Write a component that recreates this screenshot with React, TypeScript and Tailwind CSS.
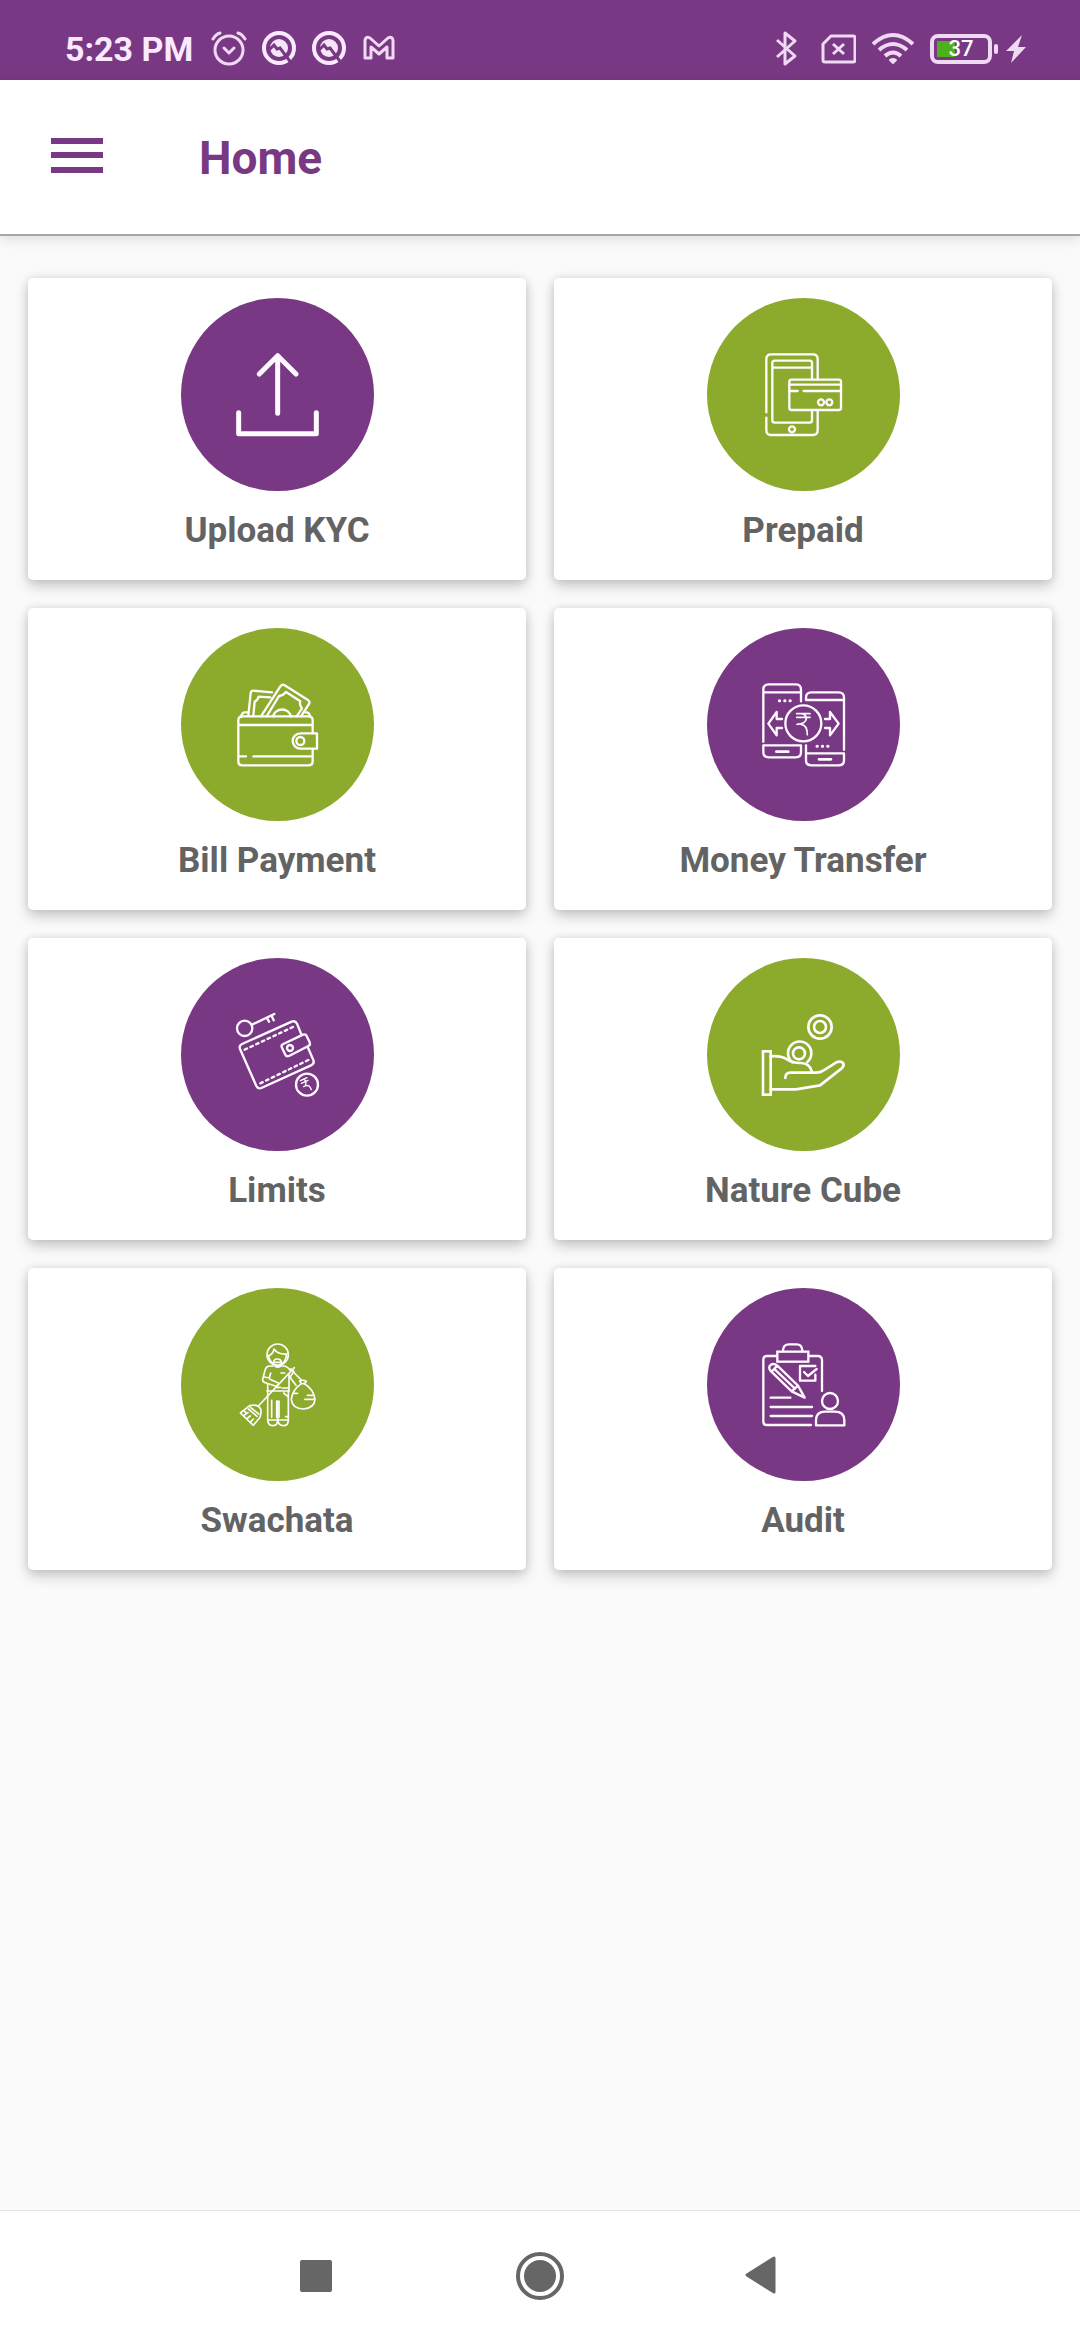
import React from 'react';

interface Tile {
  label: string;
  tone: 'purple' | 'green';
  viewBox: string;
  strokeWidth: number;
  art: React.ReactNode;
}

const LEFT_BOX = '30 23 579 579';
const RIGHT_BOX = '18 23 579 579';

const tiles: Tile[] = [
  {
    label: 'Upload KYC',
    tone: 'purple',
    viewBox: LEFT_BOX,
    strokeWidth: 15,
    art: <path d="M203 367V430H436V367M320 198V369M265 251L320 196L375 251" />,
  },
  {
    label: 'Prepaid',
    tone: 'green',
    viewBox: RIGHT_BOX,
    strokeWidth: 7,
    art: (
      <>
        <path d="M196 366V206Q196 192 210 192H336Q350 192 350 206V266M350 360V420Q350 434 336 434H210Q196 434 196 420V382" />
        <path d="M333 266V218Q333 211 326 211H221Q214 211 214 218V390Q214 397 221 397H326Q333 397 333 390V360M214 232H333" />
        <rect x="265" y="268" width="155" height="91" rx="6" />
        <path d="M265 283H420M265 302H290M308 302H420" />
        <circle cx="360" cy="336" r="9" />
        <circle cx="385" cy="336" r="9" />
        <circle cx="273" cy="417" r="9" />
      </>
    ),
  },
  {
    label: 'Bill Payment',
    tone: 'green',
    viewBox: LEFT_BOX,
    strokeWidth: 7,
    art: (
      <>
        <path d="M425 335V300Q425 288 413 288H213Q202 288 202 300V423Q202 435 213 435H413Q425 435 425 423V388M202 314H425" />
        <path d="M210 290Q212 276 222 276H232M403 276H408Q416 278 417 289" />
        <path d="M438 339H388A23 23 0 0 0 388 385H438Z" />
        <circle cx="388" cy="362" r="12" />
        <path d="M205 408H225M247 408H422" />
        <path d="M232 286L239 218Q240 211 247 211L303 216M247 286L251 244Q259 241 263 229L298 231" />
        <path d="M270 288L328 198Q334 190 341 195L412 240Q418 245 414 251L390 288" />
        <path d="M287 288L324 227Q336 226 345 215L388 243Q384 252 393 264L377 288" />
        <path d="M306 288A28 28 0 0 1 360 288" />
      </>
    ),
  },
  {
    label: 'Money Transfer',
    tone: 'purple',
    viewBox: RIGHT_BOX,
    strokeWidth: 7,
    art: (
      <>
        <path d="M187 364V208Q187 192 203 192H285Q300 192 300 208V243M187 216H300" />
        <path d="M187 375H300V396Q300 411 285 411H203Q187 411 187 396Z" />
        <path d="M315 238V232Q315 216 331 216H413Q429 216 429 232V388M315 239H429" />
        <path d="M315 375V420Q315 435 331 435H413Q429 435 429 420V399H315" />
        <path d="M226 394H262M354 417H390" strokeWidth="8" />
        <path d="M235 241h1M251 241h1M267 241h1M348 378h1M364 378h1M380 378h1" strokeWidth="9" />
        <circle cx="307" cy="309" r="54" />
        <path d="M287 280H327M287 291H327M302 280Q316 283 316 295Q314 311 288 312M300 312Q319 314 319 343" strokeWidth="5" />
        <path d="M243 296H227V275L202 310L227 345V323H243M372 296H387V275L413 310L387 345V323H372" />
      </>
    ),
  },
  {
    label: 'Limits',
    tone: 'purple',
    viewBox: LEFT_BOX,
    strokeWidth: 7,
    art: (
      <>
        <circle cx="221" cy="234" r="23" />
        <path d="M243 223L310 191M288 203L294 214M302 197L308 210" />
        <path d="M390 250L378 220Q373 210 362 214L213 281Q203 286 207 296L256 407Q261 417 271 413L420 345Q431 340 427 329L411 292" />
        <path d="M221 298L368 229M268 399L414 328" strokeDasharray="8 11" />
        <path d="M337 281L396 253Q404 250 407 257L416 276Q419 284 412 287L354 317Q346 320 343 313L332 290Q330 284 337 281Z" />
        <circle cx="357" cy="293" r="9" />
        <circle cx="408" cy="403" r="33" />
        <path d="M388 391L408 382M391 399L411 390M399 387Q409 395 402 407L398 409M402 407Q415 401 421 418" strokeWidth="4" />
      </>
    ),
  },
  {
    label: 'Nature Cube',
    tone: 'green',
    viewBox: RIGHT_BOX,
    strokeWidth: 8,
    art: (
      <>
        <circle cx="357" cy="230" r="35" />
        <circle cx="357" cy="230" r="18" />
        <path d="M273 335A35 35 0 1 1 319 335" />
        <circle cx="294" cy="309" r="18" />
        <rect x="186" y="303" width="23" height="130" strokeLinejoin="miter" />
        <path d="M209 318Q240 315 259 328Q276 339 300 338Q326 339 332 362" />
        <path d="M253 383Q253 367 268 367H346Q358 367 368 360L406 336Q420 330 427 339Q430 347 422 354L357 405L285 417H209" />
      </>
    ),
  },
  {
    label: 'Swachata',
    tone: 'green',
    viewBox: LEFT_BOX,
    strokeWidth: 5,
    art: (
      <>
        <circle cx="320" cy="223" r="32" />
        <path d="M293 226Q306 222 309 206Q320 223 348 221M293 226Q294 240 306 250M346 222Q346 240 334 250" />
        <path d="M308 250Q306 236 319 236Q332 236 331 250Q320 262 308 250M313 246H326" />
        <path d="M307 257H296Q286 257 283 267L275 297Q274 305 283 307L313 317Q323 316 322 308L297 297M299 278L295 293L280 290" />
        <path d="M332 257H341Q350 259 357 269M312 257Q320 264 329 257M330 278H341M354 283V332M290 311V332" />
        <path d="M288 332H354M316 321H328M333 323H352M338 338L350 348" />
        <path d="M290 332V418Q291 436 305 436Q320 436 320 418V362M320 418Q322 436 337 436Q352 436 352 418V332M291 419H351" />
        <path d="M302 360V411M317 362V411M324 362V411M344 409H350" />
        <path d="M370 262L262 377M359 266L369 274" />
        <path d="M208 398L236 376Q260 370 269 386Q272 400 266 412L247 435Z" />
        <path d="M238 381L263 401M232 386L258 408M220 404L231 397M230 413L238 407M240 424L247 416M224 396L219 391" />
        <path d="M367 275L391 299M357 291L375 315M367 275L357 291" />
        <path d="M386 302Q398 297 406 303L400 310H391ZM391 310Q363 330 361 358Q364 385 397 386Q430 383 432 357Q428 326 400 310" />
        <path d="M367 339H380M409 345H425M401 357H428" />
      </>
    ),
  },
  {
    label: 'Audit',
    tone: 'purple',
    viewBox: RIGHT_BOX,
    strokeWidth: 7,
    art: (
      <>
        <path d="M227 227H198Q187 227 187 238V424Q187 434 198 434H330M325 227H350Q363 227 363 240V332" />
        <rect x="229" y="214" width="93" height="30" strokeLinejoin="miter" />
        <path d="M246 211Q246 192 264 192H287Q303 192 304 211" />
        <path d="M229 256L291 316L311 352L272 333L208 271Q201 261 209 254Q218 247 229 256ZM229 256L212 274M222 268L282 325M291 316L272 333" />
        <path d="M343 257H297V301H343V283M309 275L321 287L347 266" />
        <path d="M209 352H268M209 380H333M209 407H333" />
        <circle cx="387" cy="362" r="24" />
        <path d="M345 435V420Q345 394 372 394H402Q430 394 430 420V435Z" />
      </>
    ),
  },
];

function AlarmIcon() {
  return (
    <svg viewBox="0 0 36 36" className="size-9" fill="none" stroke="#efd9f3" strokeWidth="3" strokeLinecap="round" strokeLinejoin="round">
      <circle cx="18" cy="19" r="14" />
      <path d="M13 17L18 22L23 17" />
      <path d="M2 8Q5 3 9 2M34 8Q31 3 27 2" />
    </svg>
  );
}

function QuickIcon() {
  return (
    <svg viewBox="0 0 36 36" className="size-9" fill="none">
      <circle cx="18" cy="17" r="15" stroke="#fbeaff" strokeWidth="4" />
      <circle cx="18" cy="17" r="9" fill="#f4e6f6" />
      <path d="M7 20L13 14L16 18L19 17L31 33" stroke="#793883" strokeWidth="3" />
    </svg>
  );
}

function MailIcon() {
  return (
    <svg viewBox="0 0 36 36" className="size-9" fill="none" stroke="#efd9f3" strokeWidth="3" strokeLinejoin="round">
      <path d="M4 27V9Q5 5 9 7L18 15L27 7Q31 5 32 9V27H26V16L18 23L10 16V27Z" />
    </svg>
  );
}

function StatusBar() {
  return (
    <div className="flex h-20 items-center justify-between bg-[#793883] pt-[18px] pr-[54px] pl-[65px]">
      <div className="flex items-center gap-[14px]">
        <span className="mr-1 text-[34px] leading-10 font-bold text-[#fbeaff]">5:23 PM</span>
        <AlarmIcon />
        <QuickIcon />
        <QuickIcon />
        <MailIcon />
      </div>
      <div className="flex items-center gap-4">
        <svg viewBox="0 0 36 36" className="size-9" fill="none" stroke="#efd9f3" strokeWidth="3" strokeLinejoin="round">
          <path d="M9 9L27 25L17 33V2L27 10L9 26" />
        </svg>
        <svg viewBox="0 0 36 36" className="size-9" fill="none" stroke="#efd9f3" strokeWidth="3" strokeLinejoin="round">
          <path d="M11 5H33Q35 5 35 7V29Q35 31 33 31H5Q3 31 3 29V13Z" />
          <path d="M13 13L24 23M24 13L13 23" />
        </svg>
        <svg viewBox="0 0 42 36" className="h-9 w-[42px]" fill="none" stroke="#efd9f3" strokeWidth="4">
          <path d="M1 13Q21 -5 41 13M7 19Q21 7 35 19M13 25Q21 18 29 25" />
          <path d="M18 29Q21 27 24 29L21 32Z" fill="#efd9f3" stroke="#efd9f3" strokeWidth="2" strokeLinejoin="round" />
        </svg>
        <div className="flex items-center gap-2">
          <div className="flex items-center gap-[2px]">
            <div className="relative flex h-[30px] w-[62px] items-center justify-center rounded-lg border-4 border-[#efd9f3]">
              <span className="absolute top-[3px] left-[3px] h-4 w-[18px] bg-[#4caf1c]" />
              <span className="relative text-[22px] leading-6 font-medium text-white">37</span>
            </div>
            <span className="h-[10px] w-1 rounded-full bg-[#efd9f3]" />
          </div>
          <svg viewBox="0 0 20 30" className="h-[30px] w-5" fill="#efd9f3">
            <path d="M16 1L0 17H8L5 29L20 13H12Z" />
          </svg>
        </div>
      </div>
    </div>
  );
}

function TileCard({ tile }: { tile: Tile }) {
  return (
    <button
      type="button"
      className="flex flex-col items-center rounded-[5px] bg-white pt-5 pb-[31px] shadow-[0_6px_14px_rgba(0,0,0,0.2),0_0_8px_rgba(0,0,0,0.1)]"
    >
      <span className={`size-[193px] rounded-full ${tile.tone === 'purple' ? 'bg-[#793883]' : 'bg-[#8caa2b]'}`}>
        <svg
          viewBox={tile.viewBox}
          className="size-full"
          fill="none"
          stroke="#fffaff"
          strokeWidth={tile.strokeWidth}
          strokeLinecap="round"
          strokeLinejoin="round"
          aria-hidden="true"
        >
          {tile.art}
        </svg>
      </span>
      <span className="mt-[22px] text-[35px] leading-9 font-bold text-[#636363]">{tile.label}</span>
    </button>
  );
}

export default function App() {
  return (
    <div className="flex min-h-screen flex-col bg-[#fafafa] font-[Roboto,sans-serif]">
      <StatusBar />
      <header className="flex h-[156px] items-center gap-24 border-b-2 border-[#a6a6a6] bg-white pt-[2px] pl-[51px] shadow-[0_3px_12px_rgba(0,0,0,0.12)]">
        <button type="button" aria-label="Open menu">
          <svg viewBox="0 0 52 40" className="h-10 w-[52px]" fill="#793883">
            <path d="M0 0H52V6H0ZM0 14H52V20H0ZM0 29H52V35H0Z" />
          </svg>
        </button>
        <h1 className="text-[46px] leading-[54px] font-bold text-[#793883]">Home</h1>
      </header>

      <main className="grow px-7 pt-[42px] pb-7">
        <div className="grid grid-cols-2 gap-7">
          {tiles.map((tile) => (
            <TileCard key={tile.label} tile={tile} />
          ))}
        </div>
      </main>

      <nav className="flex h-[130px] items-center justify-center gap-[164px] border-t border-[#e2e2e2] bg-white">
        <button type="button" aria-label="Recent apps">
          <svg viewBox="0 0 60 60" className="size-[60px]" fill="#666666">
            <rect x="14" y="14" width="32" height="32" rx="2" />
          </svg>
        </button>
        <button type="button" aria-label="Home screen">
          <svg viewBox="0 0 60 60" className="size-[60px]">
            <circle cx="30" cy="30" r="22" fill="none" stroke="#666666" strokeWidth="4" />
            <circle cx="30" cy="30" r="16" fill="#666666" />
          </svg>
        </button>
        <button type="button" aria-label="Back">
          <svg viewBox="0 0 60 60" className="size-[60px]" fill="#666666" stroke="#666666" strokeWidth="3" strokeLinejoin="round">
            <path d="M13 29L40 12V46Z" />
          </svg>
        </button>
      </nav>
    </div>
  );
}
